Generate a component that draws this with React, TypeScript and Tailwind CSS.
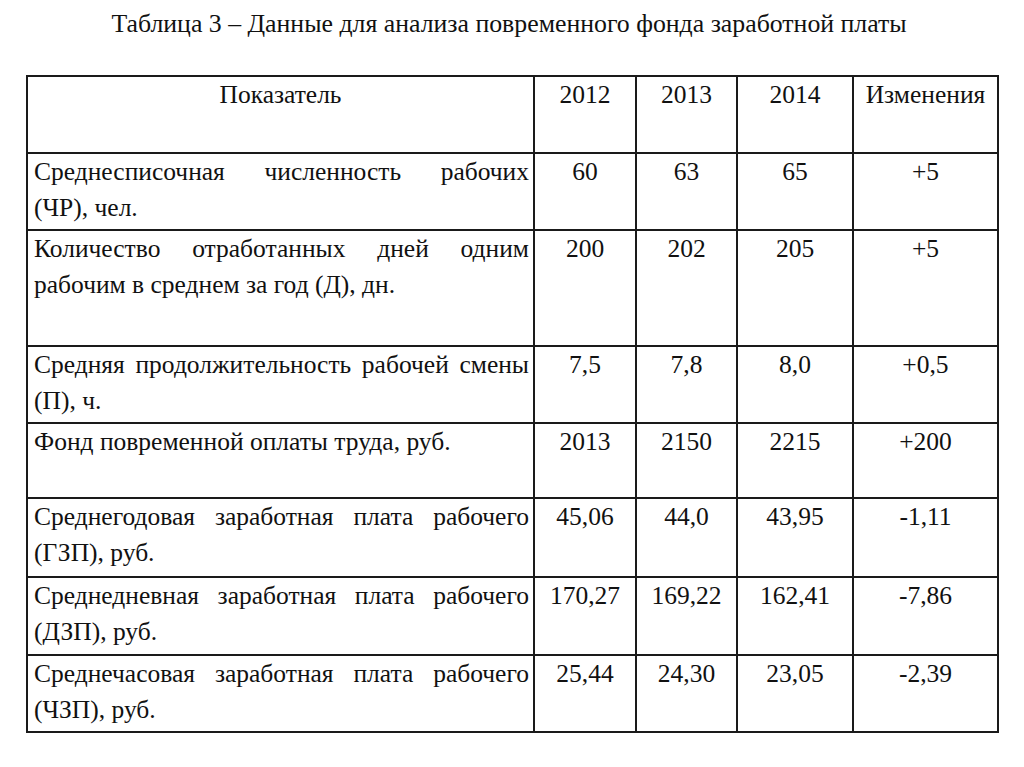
const rows: [string, string, string, string, string, string][] = [
  ['Среднесписочная численность рабочих (ЧР),\u00a0чел.', '60', '63', '65', '+5', 'h-[77px]'],
  ['Количество отработанных дней одним рабочим в среднем за год (Д), дн.', '200', '202', '205', '+5', 'h-[116px]'],
  ['Средняя продолжительность рабочей смены (П), ч.', '7,5', '7,8', '8,0', '+0,5', 'h-[77px]'],
  ['Фонд повременной оплаты труда, руб.', '2013', '2150', '2215', '+200', 'h-[75px]'],
  ['Среднегодовая заработная плата рабочего (ГЗП), руб.', '45,06', '44,0', '43,95', '-1,11', 'h-[79px]'],
  ['Среднедневная заработная плата рабочего (ДЗП), руб.', '170,27', '169,22', '162,41', '-7,86', 'h-[78px]'],
  ['Среднечасовая заработная плата рабочего (ЧЗП), руб.', '25,44', '24,30', '23,05', '-2,39', 'h-[77px]'],
];

export default function App() {
  return (
    <div className="w-[1024px] h-[767px] bg-white text-[#111] font-[Liberation_Serif] overflow-hidden">
      {/* Title */}
      <div className="pt-[7px] pr-[6px] h-[75px] text-center text-[25.8px] leading-[34px] whitespace-nowrap">
        Таблица 3 – Данные для анализа повременного фонда заработной платы
      </div>

      <div className="pl-[26px]">
        <table className="table-fixed border-collapse text-[25.5px] leading-[36px]">
          <colgroup>
            <col className="w-[507px]" />
            <col className="w-[102px]" />
            <col className="w-[101px]" />
            <col className="w-[116px]" />
            <col className="w-[145px]" />
          </colgroup>
          <thead>
            <tr className="h-[77px]">
              <th className="border-2 border-[#1a1a1a] align-top font-normal text-center">Показатель</th>
              <th className="border-2 border-[#1a1a1a] align-top font-normal text-center">2012</th>
              <th className="border-2 border-[#1a1a1a] align-top font-normal text-center">2013</th>
              <th className="border-2 border-[#1a1a1a] align-top font-normal text-center">2014</th>
              <th className="border-2 border-[#1a1a1a] align-top font-normal text-center">Изменения</th>
            </tr>
          </thead>
          <tbody>
            {rows.map(([label, a, b, c, d, h]) => (
              <tr key={label} className={h}>
                <td className="border-2 border-[#1a1a1a] align-top pl-[6px] pr-[4px] text-justify [text-align-last:left]">
                  {label}
                </td>
                <td className="border-2 border-[#1a1a1a] align-top text-center">{a}</td>
                <td className="border-2 border-[#1a1a1a] align-top text-center">{b}</td>
                <td className="border-2 border-[#1a1a1a] align-top text-center">{c}</td>
                <td className="border-2 border-[#1a1a1a] align-top text-center">{d}</td>
              </tr>
            ))}
          </tbody>
        </table>
      </div>
    </div>
  );
}
